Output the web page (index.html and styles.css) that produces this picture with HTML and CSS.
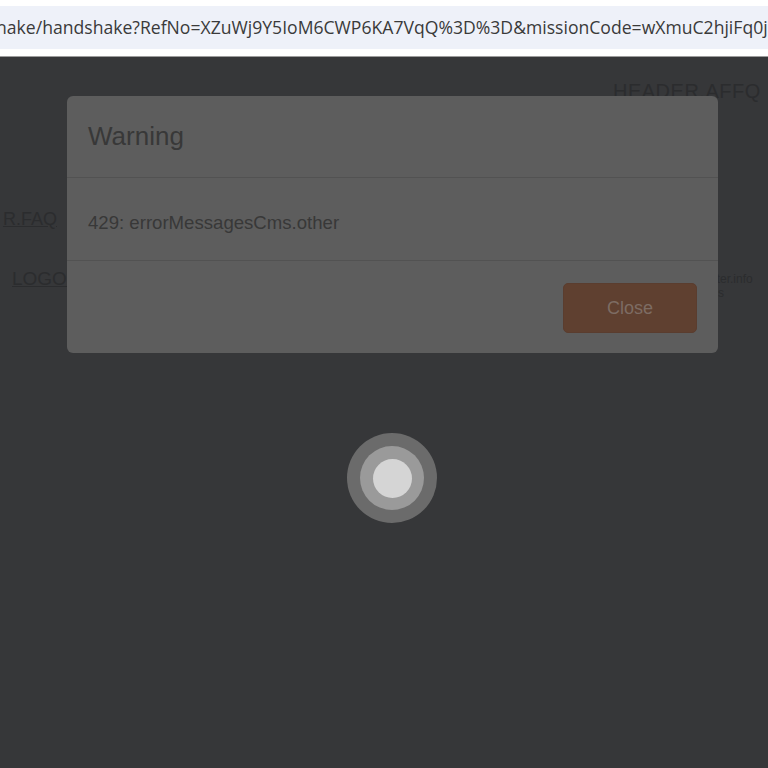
FILE: index.html
```html
<!DOCTYPE html>
<html>
<head>
<meta charset="utf-8">
<link rel="stylesheet" href="styles.css">
</head>
<body>
<div class="browserbar">
  <div class="url">hake/handshake?RefNo=XZuWj9Y5IoM6CWP6KA7VqQ%3D%3D&amp;missionCode=wXmuC2hjiFq0j</div>
</div>
<div class="page">
  <div class="bg-header"><span class="bg-title">HEADER.AFFQ</span></div>
  <div class="bg-faq"><a class="bg-link">R.FAQ</a></div>
  <div class="bg-row">
    <a class="bg-link logo">LOGO</a>
    <span class="bg-right">footer.info<br>links</span>
  </div>

  <div class="modal">
    <div class="modal-header">Warning</div>
    <div class="modal-body">429: errorMessagesCms.other</div>
    <div class="modal-footer"><button class="btn-close">Close</button></div>
  </div>

  <div class="spinner"><div class="ring-mid"><div class="ring-in"></div></div></div>
</div>
</body>
</html>
```
FILE: styles.css
```css
html, body {
  margin: 0;
  padding: 0;
  background: #363739;
  font-family: "Liberation Sans", Arial, sans-serif;
  overflow: hidden;
}
.browserbar {
  background: #ffffff;
  height: 57px;
  padding-top: 6px;
  box-sizing: border-box;
  border-bottom: 1px solid #9c9c9c;
}
.url {
  height: 43px;
  line-height: 43px;
  background: #eef1f9;
  color: #3a3a3a;
  font-family: "Open Sans", "Noto Sans", sans-serif;
  font-size: 17.6px;
  white-space: nowrap;
  overflow: hidden;
  text-indent: -4px;
}
.page {
  position: relative;
  height: 710px;
  color: #2b2c2e;
}
.bg-header {
  padding: 23px 0 0 613px;
  height: 27px;
  white-space: nowrap;
  overflow: hidden;
}
.bg-title {
  font-size: 20px;
  letter-spacing: 0.5px;
}
.bg-faq {
  padding-top: 102px;
  display: flex;
  justify-content: flex-end;
  width: 57px;
  font-size: 18px;
  white-space: nowrap;
}
.bg-link {
  text-decoration: underline;
}
.bg-row {
  display: flex;
  justify-content: space-between;
  align-items: flex-start;
  padding: 38px 0 0 12px;
  font-size: 19px;
}
.bg-right {
  font-size: 12px;
  line-height: 14px;
  padding-top: 4px;
  width: 68px;
  overflow: hidden;
  white-space: nowrap;
}
.modal {
  position: absolute;
  top: 39px;
  left: 67px;
  width: 651px;
  height: 257px;
  background: #5d5d5d;
  border-radius: 6px;
  display: flex;
  flex-direction: column;
  color: #383838;
}
.modal-header {
  height: 82px;
  box-sizing: border-box;
  border-bottom: 1px solid #525252;
  padding: 0 21px 0;
  display: flex;
  align-items: center;
  font-size: 26px;
}
.modal-body {
  height: 83px;
  box-sizing: border-box;
  border-bottom: 1px solid #525252;
  padding: 8px 21px 0;
  display: flex;
  align-items: center;
  font-size: 18.6px;
}
.modal-footer {
  flex: 1;
  display: flex;
  justify-content: flex-end;
  align-items: flex-start;
  padding: 22px 21px 0;
}
.btn-close {
  width: 134px;
  height: 50px;
  background: #5f4030;
  border: 1px solid #5a3d2f;
  border-radius: 5px;
  color: #7d6c63;
  font-family: "Liberation Sans", Arial, sans-serif;
  font-size: 18px;
  padding-top: 2px;
}
.spinner {
  position: absolute;
  left: 347px;
  top: 376px;
  width: 90px;
  height: 90px;
  border-radius: 50%;
  background: #6b6b6b;
  display: flex;
  align-items: center;
  justify-content: center;
}
.ring-mid {
  width: 64px;
  height: 64px;
  border-radius: 50%;
  background: #9a9a9a;
  display: flex;
  align-items: center;
  justify-content: center;
}
.ring-in {
  width: 39px;
  height: 39px;
  border-radius: 50%;
  background: #d5d5d5;
}
```
